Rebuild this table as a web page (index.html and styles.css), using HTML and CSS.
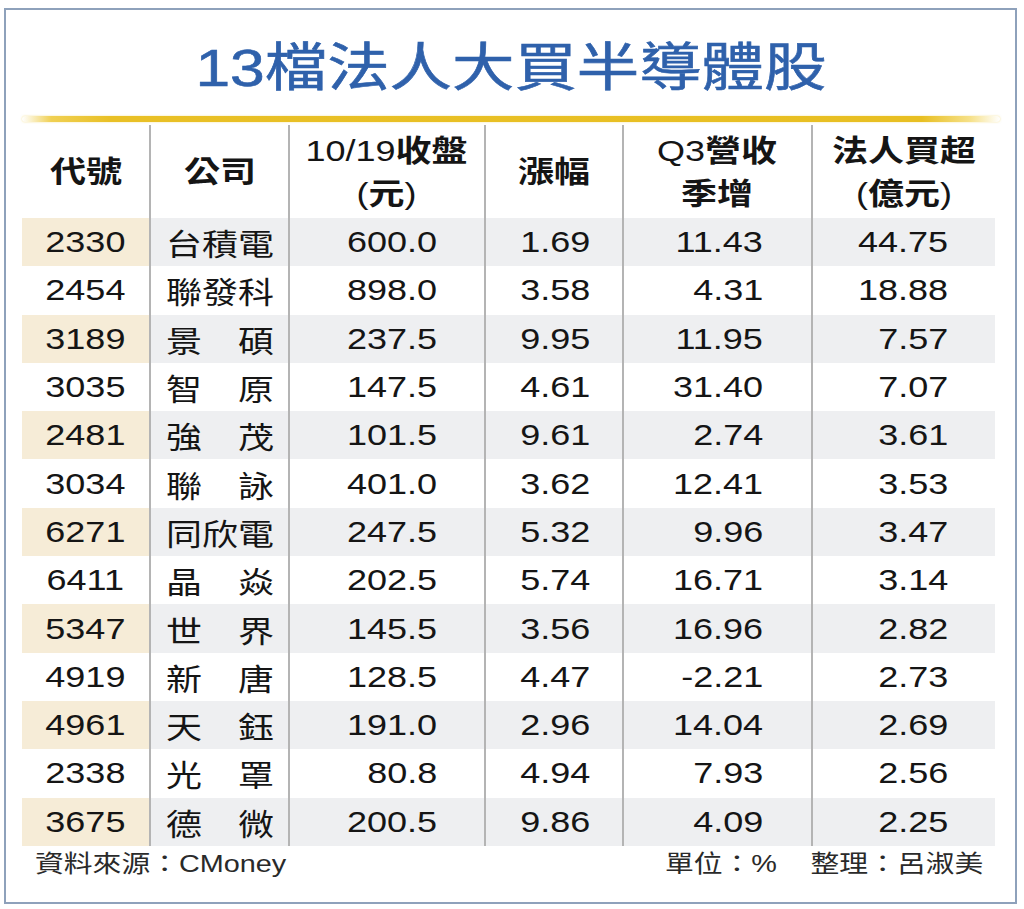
FILE: index.html
```html
<!DOCTYPE html>
<html lang="zh-Hant">
<head>
<meta charset="utf-8">
<title>13檔法人大買半導體股</title>
<link rel="stylesheet" href="styles.css">
</head>
<body>
<div class="card">
  <h1 class="title"><span class="sx">13檔法人大買半導體股</span></h1>
  <div class="rule"></div>
  <div class="table">
    <div class="row head">
      <div class="c c1"><span class="sx">代號</span></div>
      <div class="c c2"><span class="sx">公司</span></div>
      <div class="c c3"><span class="sx"><span class="lat">10/19</span>收盤<br><span class="lat">(</span>元<span class="lat">)</span></span></div>
      <div class="c c4"><span class="sx">漲幅</span></div>
      <div class="c c5"><span class="sx"><span class="lat">Q3</span>營收<br>季增</span></div>
      <div class="c c6"><span class="sx">法人買超<br><span class="lat">(</span>億元<span class="lat">)</span></span></div>
    </div>
    <div class="row alt">
      <div class="c c1"><span class="sx">2330</span></div>
      <div class="c c2"><span class="sx name">台積電</span></div>
      <div class="c c3"><span class="sx">600.0</span></div>
      <div class="c c4"><span class="sx">1.69</span></div>
      <div class="c c5"><span class="sx">11.43</span></div>
      <div class="c c6"><span class="sx">44.75</span></div>
    </div>
    <div class="row">
      <div class="c c1"><span class="sx">2454</span></div>
      <div class="c c2"><span class="sx name">聯發科</span></div>
      <div class="c c3"><span class="sx">898.0</span></div>
      <div class="c c4"><span class="sx">3.58</span></div>
      <div class="c c5"><span class="sx">4.31</span></div>
      <div class="c c6"><span class="sx">18.88</span></div>
    </div>
    <div class="row alt">
      <div class="c c1"><span class="sx">3189</span></div>
      <div class="c c2"><span class="sx name two"><i>景</i><i>碩</i></span></div>
      <div class="c c3"><span class="sx">237.5</span></div>
      <div class="c c4"><span class="sx">9.95</span></div>
      <div class="c c5"><span class="sx">11.95</span></div>
      <div class="c c6"><span class="sx">7.57</span></div>
    </div>
    <div class="row">
      <div class="c c1"><span class="sx">3035</span></div>
      <div class="c c2"><span class="sx name two"><i>智</i><i>原</i></span></div>
      <div class="c c3"><span class="sx">147.5</span></div>
      <div class="c c4"><span class="sx">4.61</span></div>
      <div class="c c5"><span class="sx">31.40</span></div>
      <div class="c c6"><span class="sx">7.07</span></div>
    </div>
    <div class="row alt">
      <div class="c c1"><span class="sx">2481</span></div>
      <div class="c c2"><span class="sx name two"><i>強</i><i>茂</i></span></div>
      <div class="c c3"><span class="sx">101.5</span></div>
      <div class="c c4"><span class="sx">9.61</span></div>
      <div class="c c5"><span class="sx">2.74</span></div>
      <div class="c c6"><span class="sx">3.61</span></div>
    </div>
    <div class="row">
      <div class="c c1"><span class="sx">3034</span></div>
      <div class="c c2"><span class="sx name two"><i>聯</i><i>詠</i></span></div>
      <div class="c c3"><span class="sx">401.0</span></div>
      <div class="c c4"><span class="sx">3.62</span></div>
      <div class="c c5"><span class="sx">12.41</span></div>
      <div class="c c6"><span class="sx">3.53</span></div>
    </div>
    <div class="row alt">
      <div class="c c1"><span class="sx">6271</span></div>
      <div class="c c2"><span class="sx name">同欣電</span></div>
      <div class="c c3"><span class="sx">247.5</span></div>
      <div class="c c4"><span class="sx">5.32</span></div>
      <div class="c c5"><span class="sx">9.96</span></div>
      <div class="c c6"><span class="sx">3.47</span></div>
    </div>
    <div class="row">
      <div class="c c1"><span class="sx">6411</span></div>
      <div class="c c2"><span class="sx name two"><i>晶</i><i>焱</i></span></div>
      <div class="c c3"><span class="sx">202.5</span></div>
      <div class="c c4"><span class="sx">5.74</span></div>
      <div class="c c5"><span class="sx">16.71</span></div>
      <div class="c c6"><span class="sx">3.14</span></div>
    </div>
    <div class="row alt">
      <div class="c c1"><span class="sx">5347</span></div>
      <div class="c c2"><span class="sx name two"><i>世</i><i>界</i></span></div>
      <div class="c c3"><span class="sx">145.5</span></div>
      <div class="c c4"><span class="sx">3.56</span></div>
      <div class="c c5"><span class="sx">16.96</span></div>
      <div class="c c6"><span class="sx">2.82</span></div>
    </div>
    <div class="row">
      <div class="c c1"><span class="sx">4919</span></div>
      <div class="c c2"><span class="sx name two"><i>新</i><i>唐</i></span></div>
      <div class="c c3"><span class="sx">128.5</span></div>
      <div class="c c4"><span class="sx">4.47</span></div>
      <div class="c c5"><span class="sx">-2.21</span></div>
      <div class="c c6"><span class="sx">2.73</span></div>
    </div>
    <div class="row alt">
      <div class="c c1"><span class="sx">4961</span></div>
      <div class="c c2"><span class="sx name two"><i>天</i><i>鈺</i></span></div>
      <div class="c c3"><span class="sx">191.0</span></div>
      <div class="c c4"><span class="sx">2.96</span></div>
      <div class="c c5"><span class="sx">14.04</span></div>
      <div class="c c6"><span class="sx">2.69</span></div>
    </div>
    <div class="row">
      <div class="c c1"><span class="sx">2338</span></div>
      <div class="c c2"><span class="sx name two"><i>光</i><i>罩</i></span></div>
      <div class="c c3"><span class="sx">80.8</span></div>
      <div class="c c4"><span class="sx">4.94</span></div>
      <div class="c c5"><span class="sx">7.93</span></div>
      <div class="c c6"><span class="sx">2.56</span></div>
    </div>
    <div class="row alt">
      <div class="c c1"><span class="sx">3675</span></div>
      <div class="c c2"><span class="sx name two"><i>德</i><i>微</i></span></div>
      <div class="c c3"><span class="sx">200.5</span></div>
      <div class="c c4"><span class="sx">9.86</span></div>
      <div class="c c5"><span class="sx">4.09</span></div>
      <div class="c c6"><span class="sx">2.25</span></div>
    </div>
  </div>
  <div class="foot">
    <span class="sx src">資料來源：CMoney</span>
    <span class="sx note">單位：%<span class="gap"></span>整理：呂淑美</span>
  </div>
</div>
</body>
</html>
```

FILE: styles.css
```css
html, body {
  margin: 0;
  padding: 0;
  background: #ffffff;
}

body {
  font-family: "Liberation Sans", "Noto Sans CJK TC", sans-serif;
  color: #151515;
}

.card {
  box-sizing: border-box;
  margin: 8px 0 0 4px;
  width: 1013px;
  height: 896px;
  border: 2px solid #8ea1bb;
  background: #ffffff;
}

.sx {
  display: inline-block;
  transform: scaleX(1.2);
  transform-origin: center center;
}

.title {
  margin: 28px 0 0 0;
  height: 60px;
  line-height: 60px;
  font-size: 52px;
  font-weight: 400;
  color: #2f61ab;
  text-align: center;
  white-space: nowrap;
  -webkit-text-stroke: 0.6px #2f61ab;
}

.rule {
  margin: 18px 15px 0 16px;
  height: 6px;
  border-radius: 3px;
  background: linear-gradient(to right,
    rgba(236, 196, 40, 0) 0%,
    rgba(236, 196, 40, 0.8) 3%,
    #e9c026 9%,
    #e8bf22 92%,
    rgba(240, 205, 60, 0.6) 97%,
    rgba(240, 205, 60, 0) 100%);
  box-shadow: 0 0 2px rgba(236, 196, 40, 0.5);
}

.table {
  margin: 3px 0 0 16px;
  width: 973px;
}

.row {
  display: grid;
  grid-template-columns: 127px 139px 196px 138px 189px 184px;
  height: 48.3px;
  font-size: 30px;
}

.row.head {
  height: 93px;
  font-weight: 700;
  line-height: 43px;
}

.lat {
  font-weight: 400;
}

.c {
  box-sizing: border-box;
  display: flex;
  align-items: center;
  justify-content: center;
  white-space: nowrap;
}

.c + .c {
  border-left: 2px solid #b4b4b4;
}

.head .c {
  text-align: center;
}

.row:not(.head) .c3,
.row:not(.head) .c4,
.row:not(.head) .c5,
.row:not(.head) .c6 {
  justify-content: flex-end;
}

.row:not(.head) .c3 .sx,
.row:not(.head) .c4 .sx,
.row:not(.head) .c5 .sx,
.row:not(.head) .c6 .sx {
  transform-origin: right center;
}

.row:not(.head) .c3 { padding-right: 47px; }
.row:not(.head) .c4 { padding-right: 32px; }
.row:not(.head) .c5 { padding-right: 48px; }
.row:not(.head) .c6 { padding-right: 47px; }

.alt .c {
  background: #eeeff1;
}

.alt .c1 {
  background: #f6ecd7;
}

.name {
  width: 3em;
}

.name.two {
  display: inline-flex;
  justify-content: space-between;
}

.name.two i {
  font-style: normal;
}

.foot {
  display: flex;
  justify-content: space-between;
  align-items: center;
  margin-left: 16px;
  width: 973px;
  height: 32px;
  padding: 0 12px 0 13px;
  box-sizing: border-box;
  font-size: 24px;
  color: #2a2a2a;
  white-space: nowrap;
}

.foot .src {
  transform-origin: left center;
}

.foot .note {
  transform-origin: right center;
}

.gap {
  display: inline-block;
  width: 28px;
}
```
